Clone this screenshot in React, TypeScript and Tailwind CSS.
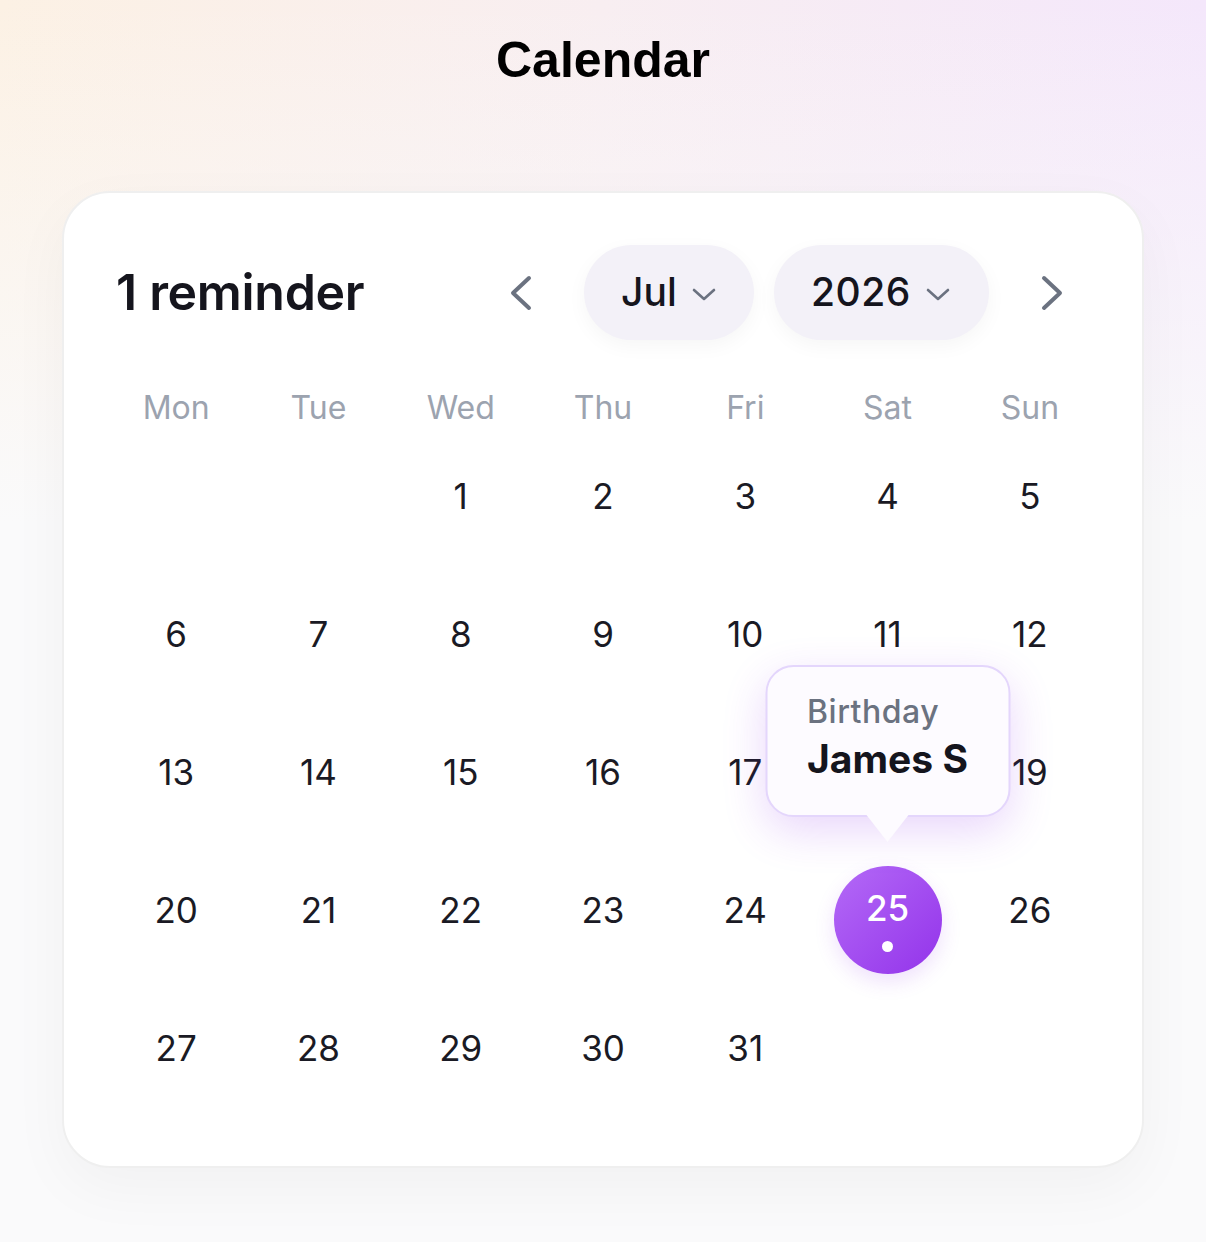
import React from 'react';

const weekdays = ['Mon', 'Tue', 'Wed', 'Thu', 'Fri', 'Sat', 'Sun'];

// July 2026 starts on a Wednesday
const cells: (number | null)[] = [null, null, ...Array.from({ length: 31 }, (_, i) => i + 1)];

const Chevron = ({ dir }: { dir: 'left' | 'right' }) => (
  <svg width="26" height="38" viewBox="0 0 26 38" fill="none" stroke="#6b7280" strokeWidth="4" strokeLinecap="round" strokeLinejoin="round">
    {dir === 'left' ? <polyline points="21,4 5,19 21,34" /> : <polyline points="5,4 21,19 5,34" />}
  </svg>
);

const Caret = () => (
  <svg width="26" height="14" viewBox="0 0 26 14" fill="none" stroke="#6b7280" strokeWidth="2.6" strokeLinecap="round" strokeLinejoin="round">
    <polyline points="3,2 13,11 23,2" />
  </svg>
);

const Tooltip = () => (
  <div className="absolute bottom-full left-1/2 -translate-x-1/2 w-[245px] pb-[25px] z-10">
    <div className="relative h-[152px] rounded-[28px] border-2 border-[#e4d6fc] bg-[#fdfbff] shadow-[0_14px_44px_rgba(147,51,234,0.2)] pl-[40px] pt-[24px]">
      <div className="text-[32px] leading-[42px] font-medium text-[#6b7280] tracking-[0.5px]">Birthday</div>
      <div className="text-[39px] leading-[52px] font-bold text-[#15151d]">James S</div>
    </div>
    <div className="absolute left-1/2 -translate-x-1/2 bottom-[0px] w-0 h-0 border-l-[21px] border-r-[21px] border-t-[27px] border-l-transparent border-r-transparent border-t-[#fdfbff]" />
  </div>
);

export default function App() {
  return (
    <div
      className="min-h-[1242px] w-full bg-[linear-gradient(180deg,rgba(250,250,251,0)_0%,#fafafb_42%),linear-gradient(90deg,#fcf1e4_0%,#f8eef1_50%,#f4e7fb_100%)] bg-[#fafafb] pb-[76px]"
      style={{ fontFamily: 'Inter, "Noto Sans", sans-serif' }}
    >
      <h1
        className="text-center text-[50px] leading-[60px] font-bold text-black pt-[30px]"
        style={{ fontFamily: '"Liberation Sans", Arial, sans-serif' }}
      >
        Calendar
      </h1>

      <div className="mx-[62px] mt-[101px] rounded-[48px] border-2 border-[#efefef] bg-white shadow-[0_20px_60px_rgba(0,0,0,0.04)] px-[41px] pt-[52px] pb-[48px]">
        <div className="flex items-center h-[95px] pl-[11px] pr-[36px]">
          <div className="text-[50px] font-semibold text-[#15151d] tracking-[-0.3px] flex-1">1 reminder</div>
          <Chevron dir="left" />
          <div className="ml-[50px] flex items-center h-[95px] w-[170px] rounded-full bg-[#f3f1f8] shadow-[0_6px_20px_rgba(0,0,0,0.04)] pl-[37px]">
            <span className="text-[39px] font-medium text-[#15151d]">Jul</span>
            <span className="ml-[14px] mt-[4px]"><Caret /></span>
          </div>
          <div className="ml-[20px] flex items-center h-[95px] w-[215px] rounded-full bg-[#f3f1f8] shadow-[0_6px_20px_rgba(0,0,0,0.04)] pl-[37px]">
            <span className="text-[39px] font-medium text-[#15151d] tracking-[0.5px]">2026</span>
            <span className="ml-[14px] mt-[4px]"><Caret /></span>
          </div>
          <span className="ml-[50px]"><Chevron dir="right" /></span>
        </div>

        <div className="grid grid-cols-7 mt-[48px]">
          {weekdays.map((d) => (
            <div key={d} className="h-[40px] flex items-center justify-center text-[32px] text-[#9ca3af]">
              {d}
            </div>
          ))}
        </div>

        <div className="grid grid-cols-7">
          {cells.map((n, i) => (
            <div key={i} className="relative h-[138px] flex items-center justify-center">
              {n === 25 ? (
                <>
                  <Tooltip />
                  <div className="mt-[18px] w-[108px] h-[108px] rounded-full bg-[linear-gradient(135deg,#b46af7_0%,#9333ea_100%)] shadow-[0_8px_20px_rgba(147,51,234,0.15)] flex flex-col items-center justify-center">
                    <span className="text-[35px] leading-[40px] font-medium text-white">25</span>
                    <span className="mt-[13px] w-[11px] h-[11px] rounded-full bg-white" />
                  </div>
                </>
              ) : (
                <span className="text-[35px] leading-[40px] -mt-[2px] text-[#1a1a24]">{n ?? ''}</span>
              )}
            </div>
          ))}
        </div>
      </div>
    </div>
  );
}
